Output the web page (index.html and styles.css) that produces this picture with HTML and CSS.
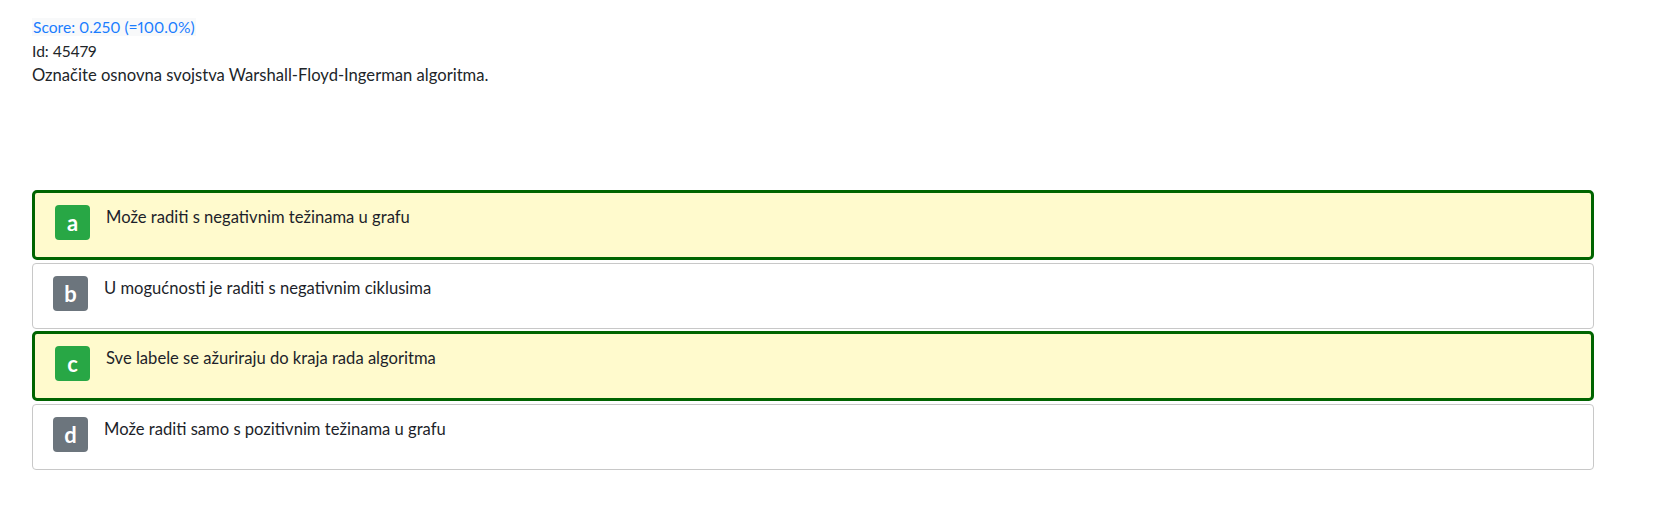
FILE: index.html
```html
<!DOCTYPE html>
<html lang="hr">
<head>
<meta charset="utf-8">
<title>Pitanje 45479</title>
<link rel="stylesheet" href="styles.css">
</head>
<body>
<div class="page">
  <div class="meta">
    <div class="line"><span class="score">Score: 0.250 (=100.0%)</span></div>
    <div class="line"><span class="num">Id: 45479</span></div>
    <div class="line">Označite osnovna svojstva Warshall-Floyd-Ingerman algoritma.</div>
  </div>
  <div class="answers">
    <div class="answer selected">
      <span class="badge badge-ok">a</span>
      <span class="text">Može raditi s negativnim težinama u grafu</span>
    </div>
    <div class="answer">
      <span class="badge badge-off">b</span>
      <span class="text">U mogućnosti je raditi s negativnim ciklusima</span>
    </div>
    <div class="answer selected">
      <span class="badge badge-ok">c</span>
      <span class="text">Sve labele se ažuriraju do kraja rada algoritma</span>
    </div>
    <div class="answer">
      <span class="badge badge-off">d</span>
      <span class="text">Može raditi samo s pozitivnim težinama u grafu</span>
    </div>
  </div>
</div>
</body>
</html>
```

FILE: styles.css
```css
html, body {
  margin: 0;
  padding: 0;
  background: #ffffff;
}

body {
  font-family: Lato, "Noto Sans", "Liberation Sans", sans-serif;
  font-size: 16.6px;
  line-height: 24px;
  color: #212529;
}

.page {
  padding: 15px 0 0 32px;
  width: 1562px;
}

.meta {
  height: 175px;
}

.score {
  color: #1a7dff;
  background: #f8f9fa;
  padding: 0 1px;
  font-size: 15.6px;
  font-variant-numeric: proportional-nums;
}

.num {
  font-size: 15.6px;
  font-variant-numeric: proportional-nums;
}

.answers {
  display: flex;
  flex-direction: column;
  gap: 2.5px;
}

.answer {
  display: flex;
  align-items: flex-start;
  gap: 16px;
  min-height: 64px;
  box-sizing: content-box;
  padding: 0 20px;
  border: 1px solid #c8c8c8;
  border-radius: 4px;
  background: #ffffff;
}

.answer.selected {
  border: 3px solid #006400;
  border-radius: 5px;
  background: #fffacd;
}

.badge {
  flex: none;
  width: 35px;
  height: 35px;
  margin-top: 12px;
  border-radius: 4px;
  color: #ffffff;
  font-weight: 700;
  font-size: 22px;
  line-height: 35px;
  text-align: center;
}

.badge-ok {
  background: #28a745;
}

.badge-off {
  background: #6c757d;
}

.text {
  margin-top: 12px;
  color: #1d1f2a;
}
```
